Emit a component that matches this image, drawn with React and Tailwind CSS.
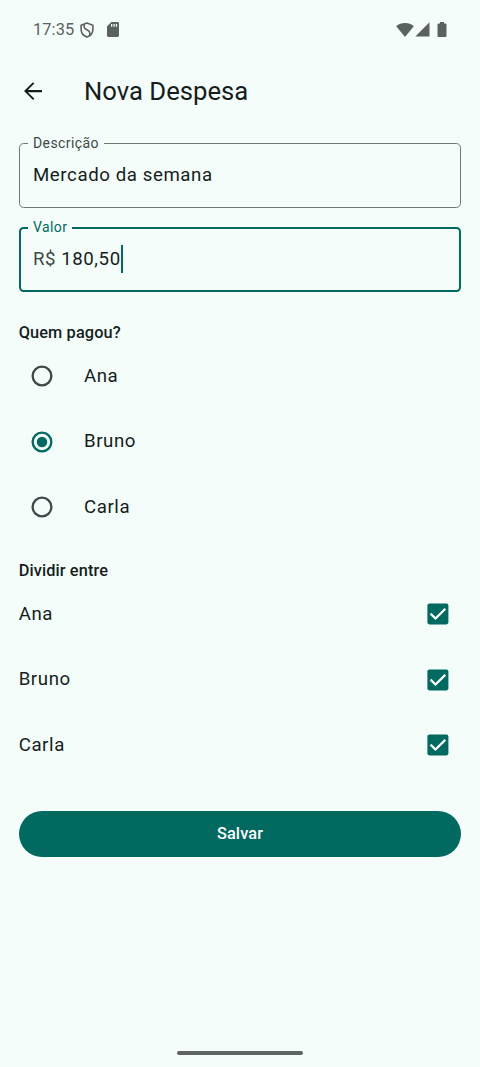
import React from 'react';

const people = ['Ana', 'Bruno', 'Carla'];

function StatusBar() {
  return (
    <header className="flex h-[58px] shrink-0 items-center pl-[33px] pr-[33px] pt-[1px] text-[#5b615f]">
      <span className="text-[16.4px] leading-[20px] tracking-[0.1px]">17:35</span>
      <svg className="ml-[6px] h-[16px] w-[14px]" viewBox="0 0 14 16" fill="none" stroke="currentColor" strokeWidth="1.6">
        <path d="M7 1L1.1 3.2V7.2C1.1 10.8 3.6 13.8 7 14.9C10.4 13.8 12.9 10.8 12.9 7.2V3.2Z" />
        <path d="M4.1 2.2V5C4.1 7.8 9.8 7.8 9.8 10.7V13.3" />
      </svg>
      <svg className="ml-[12.5px] h-[15px] w-[12px]" viewBox="0 0 12 15" fill="currentColor">
        <path fillRule="evenodd" d="M4.3 0H10.7Q12 0 12 1.3V13.6Q12 15 10.7 15H1.3Q0 15 0 13.6V4.4ZM4 2V4.8H5.3V2ZM6.4 2V4.8H7.7V2ZM8.8 2V4.8H10.1V2Z" />
      </svg>
      <div className="ml-auto flex items-center">
        <svg className="h-[14px] w-[18px]" viewBox="0 0 18 14" fill="currentColor">
          <path d="M9 14L0.2 3.2C2.6 1.1 5.6 0 9 0S15.4 1.1 17.8 3.2Z" />
        </svg>
        <svg className="ml-[1px] h-[15px] w-[15px]" viewBox="0 0 15 15" fill="currentColor">
          <path d="M14.5 0.3V14.5H0.3Z" />
        </svg>
        <svg className="ml-[7px] h-[15px] w-[10px]" viewBox="0 0 10 15" fill="currentColor">
          <path d="M3 0H7V1.4H8.3Q9.5 1.4 9.5 2.6V13.8Q9.5 15 8.3 15H1.7Q0.5 15 0.5 13.8V2.6Q0.5 1.4 1.7 1.4H3Z" />
        </svg>
      </div>
    </header>
  );
}

function Radio({ checked }) {
  return (
    <svg className={checked ? 'size-[24px] text-[#006a60]' : 'size-[24px] text-[#3f4947]'} viewBox="0 0 24 24">
      <circle cx="12" cy="12" r="9.35" fill="none" stroke="currentColor" strokeWidth="2.33" />
      {checked && <circle cx="12" cy="12" r="5.25" fill="currentColor" />}
    </svg>
  );
}

function Check() {
  return (
    <svg className="size-[22px]" viewBox="0 0 22 22">
      <rect x="0.4" y="0.4" width="21" height="21" rx="2.1" fill="#006a60" />
      <path d="M3.5 10.6L8.5 15.5L18.3 5.9" fill="none" stroke="white" strokeWidth="2.2" />
    </svg>
  );
}

export default function App() {
  return (
    <div className="flex h-[1067px] w-[480px] flex-col overflow-hidden bg-[#f4fdfa] font-['Roboto',sans-serif] text-[#161d1c]">
      <StatusBar />
      <div className="flex h-[65.33px] shrink-0 items-center pl-[18.67px] pt-[1px]">
        <svg className="size-[28px]" viewBox="0 0 24 24" fill="currentColor">
          <path d="M19.7 11.1H7.6l5.5-5.5L12 4.4l-7.7 7.7 7.7 7.7 1.2-1.2L7.6 13H19.7z" />
        </svg>
        <h1 className="ml-[37.33px] text-[25.67px] font-normal leading-[33px]">Nova Despesa</h1>
      </div>

      <main className="flex flex-col px-[18.67px] pt-[11.67px]">
        <fieldset className="h-[73.5px] rounded-[4.67px] border border-[#6f7977] pl-[8.33px]">
          <legend className="px-[5px] text-[14px] leading-[17px] tracking-[0.42px] text-[#3f4947]">Descrição</legend>
          <div className="pl-[5px] pt-[9px] text-[18.67px] leading-[28px] tracking-[0.583px]">Mercado da semana</div>
        </fieldset>
        <fieldset className="mt-[10.83px] h-[72.83px] rounded-[4.67px] border-[2.33px] border-[#006a60] pl-[7.33px]">
          <legend className="px-[5px] text-[14px] leading-[17px] tracking-[0.42px] text-[#006a60]">Valor</legend>
          <div className="flex items-center pl-[5px] pt-[8.67px] text-[18.67px] leading-[28px] tracking-[0.583px]">
            <span className="text-[#3f4947]">R$</span>
            <span className="ml-[5px]">180,50</span>
            <span className="h-[28px] w-[2.33px] bg-[#006a60]" />
          </div>
        </fieldset>

        <h2 className="mt-[28.83px] text-[16.33px] font-medium leading-[23.33px] tracking-[0.117px]">Quem pagou?</h2>
        <div className="-mt-[0.75px] flex flex-col">
          {people.map((name) => (
            <div key={name} className="flex h-[65.33px] items-center pl-[11px]">
              <Radio checked={name === 'Bruno'} />
              <span className="-mt-[0.33px] ml-[30.33px] text-[18.67px] leading-[28px] tracking-[0.583px]">{name}</span>
            </div>
          ))}
        </div>

        <h2 className="mt-[19.08px] text-[16.33px] font-medium leading-[23.33px] tracking-[0.117px]">Dividir entre</h2>
        <div className="-mt-[0.33px] flex flex-col">
          {people.map((name) => (
            <div key={name} className="flex h-[65.33px] items-center justify-between pr-[12.5px]">
              <span className="-mt-[0.33px] text-[18.67px] leading-[28px] tracking-[0.583px]">{name}</span>
              <Check />
            </div>
          ))}
        </div>

        <button className="mt-[33px] h-[46.67px] rounded-full bg-[#006a60] text-[16.33px] font-medium tracking-[0.117px] text-white">Salvar</button>
      </main>

      <div className="mx-auto mb-[12px] mt-auto h-[4.5px] w-[126px] rounded-full bg-[#5f6563]" />
    </div>
  );
}
